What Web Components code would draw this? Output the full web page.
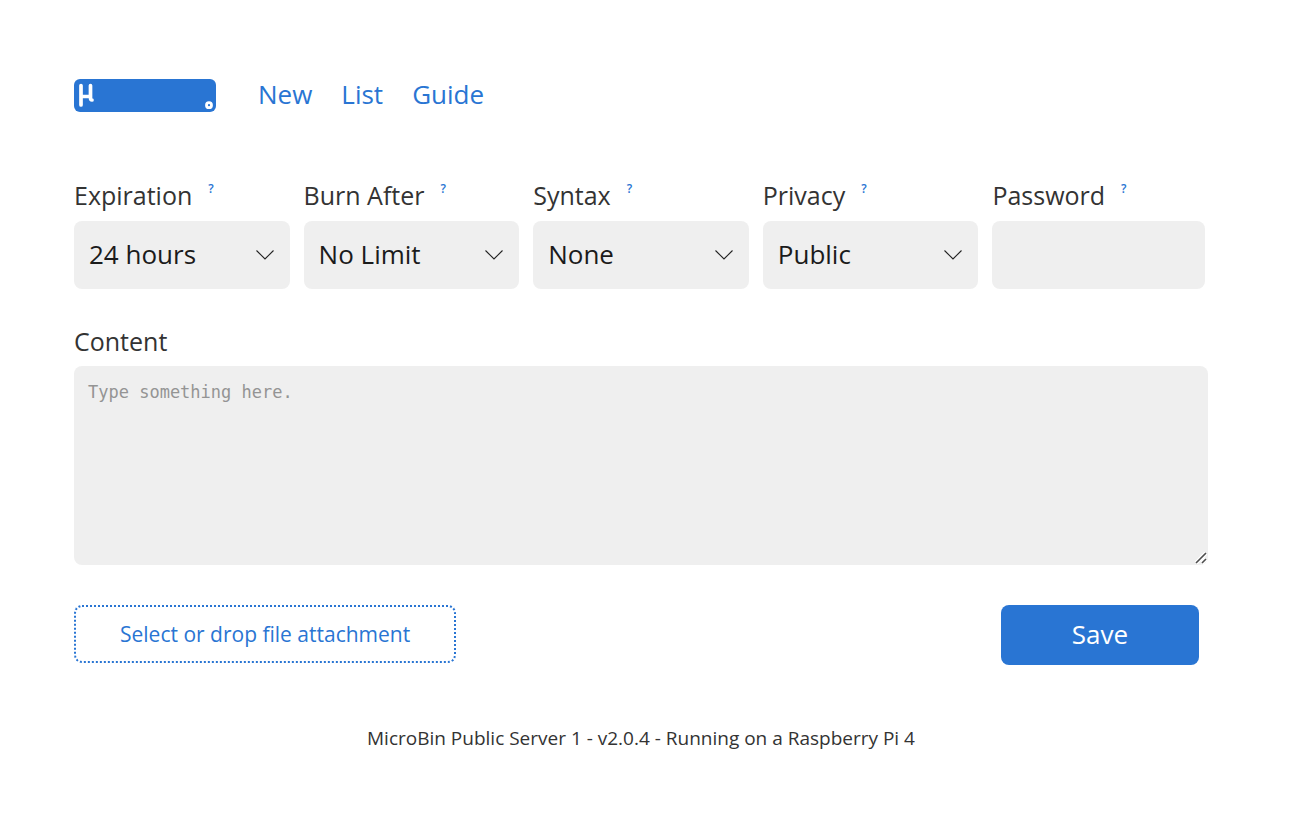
<!DOCTYPE html>
<html lang="en">
<head>
<meta charset="utf-8">
<title>MicroBin</title>
<style>
  html { background: #fff; }
  body {
    margin: 0;
    color: #333;
    font: 26px/34px "Open Sans", "Noto Sans", sans-serif;
    --accent: #2975d3;
    --field: #efefef;
    --radius: 8px;
    --caption: 25px;
  }
</style>
</head>
<body>
<micro-page>
  <micro-nav slot="header">
    <micro-logo></micro-logo>
    <micro-link to="#new">New</micro-link>
    <micro-link to="#list">List</micro-link>
    <micro-link to="#guide">Guide</micro-link>
  </micro-nav>
  <micro-form></micro-form>
  <span slot="footer">MicroBin Public Server 1 - v2.0.4 - Running on a Raspberry Pi 4</span>
</micro-page>

<script>
const define = (name, html, setup) => {
  const template = document.createElement('template');
  template.innerHTML = html;
  customElements.define(name, class extends HTMLElement {
    constructor() {
      super();
      this.attachShadow({ mode: 'open' }).append(template.content.cloneNode(true));
    }
    connectedCallback() { if (setup) setup(this, this.shadowRoot); }
  });
};

define('micro-page', `
  <style>
    :host { display: block; padding: 76px 92px 64px 74px; }
    footer { margin-top: 60px; font-size: 19px; line-height: 26px; text-align: center; }
  </style>
  <header><slot name="header"></slot></header>
  <main><slot></slot></main>
  <footer><slot name="footer"></slot></footer>`);

define('micro-nav', `
  <style>
    :host { display: block; }
    nav { display: flex; align-items: center; gap: 29px; height: 38px; }
  </style>
  <nav><slot></slot></nav>`);

define('micro-logo', `
  <style>
    :host { display: block; margin-right: 13px; }
    a { display: flex; }
    svg { display: block; }
  </style>
  <a href="#home" aria-label="MicroBin">
    <svg width="142" height="33" viewBox="0 0 142 33" aria-hidden="true">
      <rect width="142" height="33" rx="6" fill="#2975d3"/>
      <path d="M7 6.500V26M7 17.500H15.500M16.500 6.500V18.500C16.500 20.500 16.800 21 18 21" fill="none" stroke="#fff" stroke-width="3.700" stroke-linecap="round" stroke-linejoin="round"/>
      <circle cx="135" cy="26.200" r="2.500" fill="none" stroke="#fff" stroke-width="2.800"/>
    </svg>
  </a>`);

define('micro-link', `
  <style>
    :host { display: block; padding-bottom: 2px; }
    a { color: var(--accent); text-decoration: none; }
  </style>
  <a><slot></slot></a>`, (host, root) => {
    root.querySelector('a').href = host.getAttribute('to');
  });

define('micro-field', `
  <style>
    :host { display: block; min-width: 0; }
    .caption { display: flex; gap: 16px; height: 43px; font-size: var(--caption); }
    .caption a { color: var(--accent); font-size: 12px; font-weight: 600; line-height: 22px; text-decoration: none; }
    .box { display: grid; align-items: center; }
    .box > * { grid-area: 1 / 1; }
    select, input {
      appearance: none; box-sizing: border-box; width: 100%; height: 68px; margin: 0;
      padding: 0 15px 2px; border: 0; border-radius: var(--radius);
      background: var(--field); color: #1b1b1b; font: inherit;
    }
    input { width: calc(100% - 3px); }
    svg { justify-self: end; margin-right: 16px; pointer-events: none; }
  </style>
  <div class="caption"><label for="control"><slot></slot></label><a href="#help">?</a></div>
  <div class="box"></div>`, (host, root) => {
    const box = root.querySelector('.box');
    const value = host.getAttribute('value');
    box.innerHTML = value
      ? `<select id="control"><option>${value}</option></select>
         <svg width="18" height="10" viewBox="0 0 18 10" aria-hidden="true"><path d="M.5 .5L9 9L17.500 .5" fill="none" stroke="#222" stroke-width="1.100"/></svg>`
      : `<input id="control" type="password">`;
  });

define('micro-attach', `
  <style>
    :host { display: block; }
    label {
      display: flex; align-items: center; justify-content: center; box-sizing: border-box;
      position: relative; height: 58px; padding: 0 44px; border: 2px dotted var(--accent);
      border-radius: var(--radius); color: var(--accent); font-size: 21px; cursor: pointer;
    }
    input { position: absolute; inset: 0; width: 100%; height: 100%; opacity: 0; }
  </style>
  <label for="file"><slot></slot><input id="file" type="file"></label>`);

define('micro-form', `
  <style>
    :host { display: block; margin-top: 64px; }
    .options { display: grid; grid-template-columns: repeat(5, 1fr); gap: 14px; }
    .content { margin-top: 35px; }
    .content label { display: block; height: 42px; font-size: var(--caption); }
    .area { display: grid; }
    .area > * { grid-area: 1 / 1; }
    textarea {
      display: block; box-sizing: border-box; width: 100%; height: 199px; margin: 0;
      padding: 14px; border: 0; border-radius: var(--radius); background: var(--field);
      color: #333; font: 17px/24px "DejaVu Sans Mono", monospace; resize: none;
    }
    textarea::placeholder { color: #949494; }
    .grip { place-self: end; margin: 0 1px 1px 0; pointer-events: none; }
    .actions { display: flex; justify-content: space-between; align-items: flex-start; margin-top: 40px; padding-right: 9px; }
    button {
      width: 198px; height: 60px; padding: 0 0 2px; border: 0; border-radius: var(--radius);
      background: var(--accent); color: #fff; font: inherit; font-weight: 500;
    }
  </style>
  <form>
    <div class="options">
      <micro-field value="24 hours">Expiration</micro-field>
      <micro-field value="No Limit">Burn After</micro-field>
      <micro-field value="None">Syntax</micro-field>
      <micro-field value="Public">Privacy</micro-field>
      <micro-field>Password</micro-field>
    </div>
    <div class="content">
      <label for="content">Content</label>
      <div class="area">
        <textarea id="content" placeholder="Type something here."></textarea>
        <svg class="grip" width="12" height="12" viewBox="0 0 12 12" aria-hidden="true"><path d="M1 11L11 1M7 11L11 7" stroke="#fff" stroke-width="4"/><path d="M1 11L11 1M7 11L11 7" stroke="#4d4d4d" stroke-width="1.600"/></svg>
      </div>
    </div>
    <div class="actions">
      <micro-attach>Select or drop file attachment</micro-attach>
      <button type="button">Save</button>
    </div>
  </form>`);
</script>
</body>
</html>
